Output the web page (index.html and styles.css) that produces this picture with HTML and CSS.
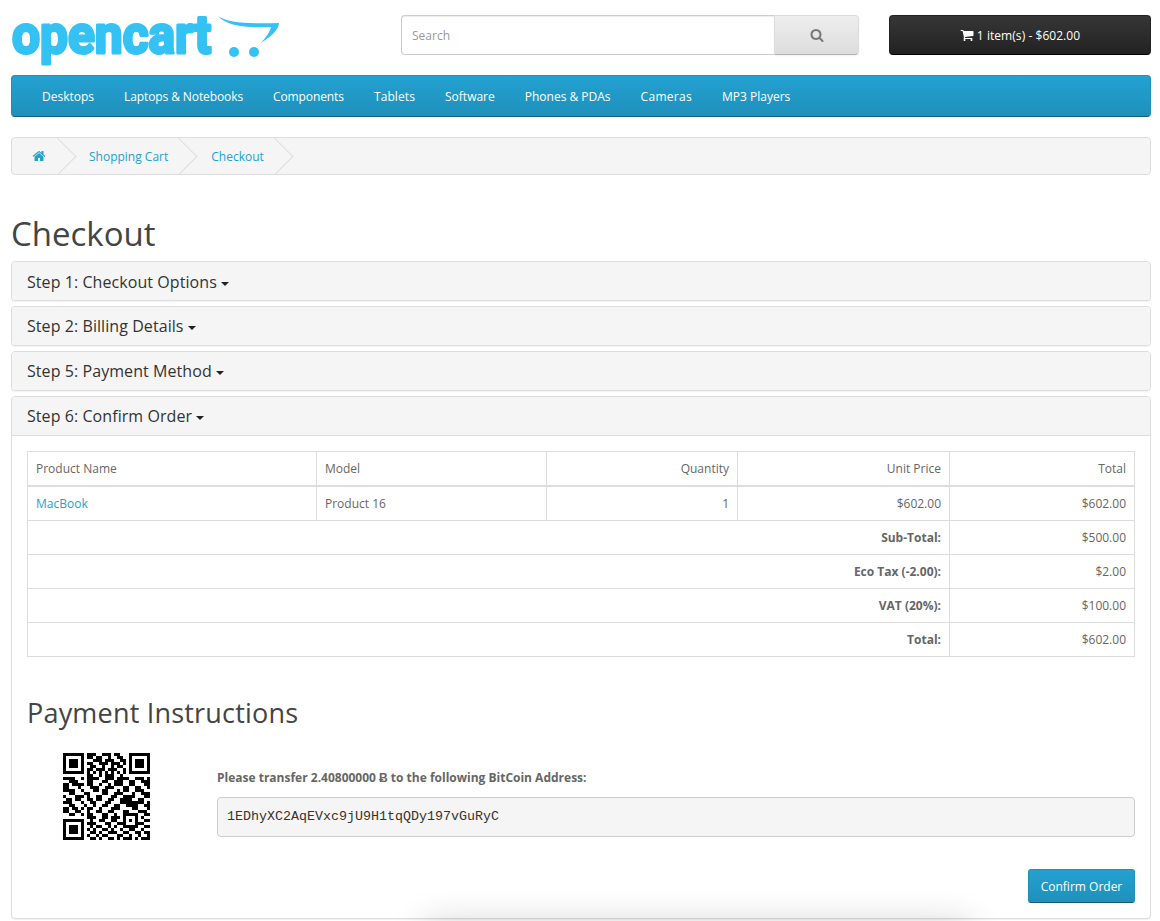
FILE: index.html
```html
<!DOCTYPE html>
<html lang="en">
<head>
  <meta charset="UTF-8">
  <title>Checkout</title>
  <link rel="stylesheet" href="styles.css">
</head>
<body>
  <div class="container">
    <header class="top">
      <a class="logo" href="#">
        <svg width="270" height="50" viewBox="11 15 270 50">
          <text class="logo-text" transform="translate(12 53) scale(0.92 1)">opencart</text>
          <path class="logo-cart" d="M218 16C228 23 250 24 279 23C279 30 270 37 261 43C266 37 270 32 271 27C250 28 228 27 218 16Z"/>
          <circle class="logo-cart" cx="234" cy="52" r="5"/>
          <circle class="logo-cart" cx="254" cy="52" r="5"/>
        </svg>
      </a>
      <div class="search">
        <input class="search-input" type="text" placeholder="Search">
        <button class="search-btn" type="button">
          <svg class="icon" viewBox="0 0 1792 1792"><path d="M1216 832q0-185-131.500-316.500t-316.500-131.500-316.500 131.500-131.500 316.500 131.500 316.500 316.500 131.500 316.500-131.500 131.500-316.500zm512 832q0 52-38 90t-90 38q-54 0-90-38l-343-342q-179 124-399 124-143 0-273.500-55.500t-225-150-150-225-55.500-273.500 55.500-273.500 150-225 225-150 273.500-55.500 273.500 55.500 225 150 150 225 55.500 273.500q0 220-124 399l343 343q37 37 37 90z"/></svg>
        </button>
      </div>
      <button class="cart" type="button">
        <svg class="icon" viewBox="0 0 1792 1792"><path d="M704 1536q0 52-38 90t-90 38-90-38-38-90 38-90 90-38 90 38 38 90zm896 0q0 52-38 90t-90 38-90-38-38-90 38-90 90-38 90 38 38 90zm128-1088v512q0 24-16.500 42.500t-40.500 21.500l-1044 122q13 60 13 70 0 16-24 64h920q26 0 45 19t19 45-19 45-45 19h-1024q-26 0-45-19t-19-45q0-11 8-31.500t16-36 21.500-40 15.500-29.500l-177-823h-204q-26 0-45-19t-19-45 19-45 45-19h256q16 0 28.500 6.500t19.500 15.500 13 24.500 8 26 5.500 29.500 4.500 26h1201q26 0 45 19t19 45z"/></svg>
        <span>1 item(s) - $602.00</span>
      </button>
    </header>

    <nav class="menu">
      <a href="#">Desktops</a>
      <a href="#">Laptops &amp; Notebooks</a>
      <a href="#">Components</a>
      <a href="#">Tablets</a>
      <a href="#">Software</a>
      <a href="#">Phones &amp; PDAs</a>
      <a href="#">Cameras</a>
      <a href="#">MP3 Players</a>
    </nav>

    <ul class="breadcrumb">
      <li class="crumb-home"><a href="#"><svg class="icon" viewBox="0 0 1792 1792"><path d="M1472 992v480q0 26-19 45t-45 19h-384v-384h-256v384h-384q-26 0-45-19t-19-45v-480q0-1 .5-3t.5-3l575-474 575 474q1 2 1 6zm223-69l-62 74q-8 9-21 11h-3q-13 0-21-7l-692-577-692 577q-12 8-24 7-13-2-21-11l-62-74q-8-10-7-23.500t11-21.500l719-599q32-26 76-26t76 26l244 204v-195q0-14 9-23t23-9h192q14 0 23 9t9 23v408l219 182q10 8 11 21.500t-7 23.500z"/></svg></a></li>
      <li><a href="#">Shopping Cart</a></li>
      <li><a href="#">Checkout</a></li>
    </ul>

    <h1>Checkout</h1>

    <div class="panel">
      <div class="panel-heading">Step 1: Checkout Options <i class="caret"></i></div>
    </div>
    <div class="panel">
      <div class="panel-heading">Step 2: Billing Details <i class="caret"></i></div>
    </div>
    <div class="panel">
      <div class="panel-heading">Step 5: Payment Method <i class="caret"></i></div>
    </div>
    <div class="panel panel-open">
      <div class="panel-heading">Step 6: Confirm Order <i class="caret"></i></div>
      <div class="panel-body">
        <table class="order">
          <colgroup>
            <col class="col-name"><col class="col-model"><col class="col-qty"><col class="col-price"><col class="col-total">
          </colgroup>
          <thead>
            <tr>
              <td>Product Name</td>
              <td>Model</td>
              <td class="right">Quantity</td>
              <td class="right">Unit Price</td>
              <td class="right">Total</td>
            </tr>
          </thead>
          <tbody>
            <tr>
              <td><a href="#">MacBook</a></td>
              <td>Product 16</td>
              <td class="right">1</td>
              <td class="right">$602.00</td>
              <td class="right">$602.00</td>
            </tr>
          </tbody>
          <tfoot>
            <tr><td colspan="4" class="right"><strong>Sub-Total:</strong></td><td class="right">$500.00</td></tr>
            <tr><td colspan="4" class="right"><strong>Eco Tax (-2.00):</strong></td><td class="right">$2.00</td></tr>
            <tr><td colspan="4" class="right"><strong>VAT (20%):</strong></td><td class="right">$100.00</td></tr>
            <tr><td colspan="4" class="right"><strong>Total:</strong></td><td class="right">$602.00</td></tr>
          </tfoot>
        </table>

        <h2>Payment Instructions</h2>
        <div class="payment">
          <div class="qr-col">
            <svg class="qr" width="87" height="87" viewBox="0 0 29 29">
              <path d="M0 .5h7M8 .5h3M13 .5h3M17 .5h2M22 .5h7M0 1.500h1M6 1.500h1M8 1.500h2M11 1.500h2M15 1.500h1M18 1.500h2M22 1.500h1M28 1.500h1M0 2.500h1M2 2.500h3M6 2.500h1M10 2.500h3M14 2.500h3M19 2.500h2M22 2.500h1M24 2.500h3M28 2.500h1M0 3.500h1M2 3.500h3M6 3.500h1M8 3.500h2M12 3.500h3M16 3.500h3M20 3.500h1M22 3.500h1M24 3.500h3M28 3.500h1M0 4.500h1M2 4.500h3M6 4.500h1M9 4.500h2M13 4.500h1M16 4.500h1M18 4.500h2M22 4.500h1M24 4.500h3M28 4.500h1M0 5.500h1M6 5.500h1M8 5.500h2M11 5.500h3M15 5.500h3M20 5.500h1M22 5.500h1M28 5.500h1M0 6.500h7M8 6.500h1M10 6.500h1M12 6.500h1M14 6.500h1M16 6.500h1M18 6.500h1M20 6.500h1M22 6.500h7M8 7.500h2M12 7.500h1M14 7.500h3M19 7.500h1"/>
              <path d="M0 8.500h4M6 8.500h1M8 8.500h4M14 8.500h3M18 8.500h4M24 8.500h3M28 8.500h1M2 9.500h3M8 9.500h2M13 9.500h2M17 9.500h3M22 9.500h2M26 9.500h3M0 10.500h2M3 10.500h4M8 10.500h2M12 10.500h1M15 10.500h1M17 10.500h3M22 10.500h2M27 10.500h2M0 11.500h2M5 11.500h1M9 11.500h3M14 11.500h3M20 11.500h2M24 11.500h2M28 11.500h1M0 12.500h4M6 12.500h1M10 12.500h2M13 12.500h2M18 12.500h1M20 12.500h2M24 12.500h3M2 13.500h2M7 13.500h2M13 13.500h2M17 13.500h3M23 13.500h1M26 13.500h3M0 14.500h1M4 14.500h3M8 14.500h1M11 14.500h2M16 14.500h2M20 14.500h4M27 14.500h2M1 15.500h2M4 15.500h2M8 15.500h2M11 15.500h2M15 15.500h2M19 15.500h4M25 15.500h2M0 16.500h3M6 16.500h1M9 16.500h2M14 16.500h2M19 16.500h8M28 16.500h1M2 17.500h2M7 17.500h1M10 17.500h1M13 17.500h2M17 17.500h2M21 17.500h4M27 17.500h2M0 18.500h2M3 18.500h2M6 18.500h1M8 18.500h2M12 18.500h1M16 18.500h3M23 18.500h2M28 18.500h1M0 19.500h2M4 19.500h2M8 19.500h1M11 19.500h2M15 19.500h2M20 19.500h2M25 19.500h3M2 20.500h2M6 20.500h1M8 20.500h2M13 20.500h2M17 20.500h1M20 20.500h5M27 20.500h2M8 21.500h3M13 21.500h2M16 21.500h3M20 21.500h1M24 21.500h1M26 21.500h1"/>
              <path d="M0 22.500h7M9 22.500h1M12 22.500h2M16 22.500h2M20 22.500h1M22 22.500h1M24 22.500h1M27 22.500h2M0 23.500h1M6 23.500h1M8 23.500h3M14 23.500h2M18 23.500h3M24 23.500h3M0 24.500h1M2 24.500h3M6 24.500h1M9 24.500h1M11 24.500h2M15 24.500h1M17 24.500h1M20 24.500h5M27 24.500h2M0 25.500h1M2 25.500h3M6 25.500h1M8 25.500h1M10 25.500h1M13 25.500h2M16 25.500h1M19 25.500h1M22 25.500h2M26 25.500h1M0 26.500h1M2 26.500h3M6 26.500h1M9 26.500h2M12 26.500h1M15 26.500h3M20 26.500h2M24 26.500h2M27 26.500h2M0 27.500h1M6 27.500h1M8 27.500h1M11 27.500h1M13 27.500h2M18 27.500h2M22 27.500h1M25 27.500h1M28 27.500h1M0 28.500h7M9 28.500h2M12 28.500h1M15 28.500h2M18 28.500h1M20 28.500h3M24 28.500h1M26 28.500h3"/>
            </svg>
          </div>
          <div class="address-col">
            <p class="address-label">Please transfer 2.40800000 Ƀ to the following BitCoin Address:</p>
            <pre class="address">1EDhyXC2AqEVxc9jU9H1tqQDy197vGuRyC</pre>
          </div>
        </div>
        <div class="buttons">
          <button class="btn-primary" type="button">Confirm Order</button>
        </div>
        <div class="fade"></div>
      </div>
    </div>
  </div>
</body>
</html>
```

FILE: styles.css
```css
* { box-sizing: border-box; }
body { margin: 0; font-family: "Open Sans", sans-serif; font-size: 12px; line-height: 17px; color: #666; background-color: #fff; }
a { color: #23a1d1; text-decoration: none; }
.container { width: 1160px; height: 921px; padding: 15px 9px 0 11px; overflow: hidden; }
.icon { display: block; width: 14px; height: 14px; fill: currentColor; }

.top { display: flex; align-items: flex-start; height: 50px; }
.logo { display: block; width: 390px; height: 50px; }
.logo svg { display: block; overflow: visible; }
.logo-text { font-family: Roboto, sans-serif; font-weight: 700; font-size: 54px; fill: #33c2f3; stroke: #33c2f3; stroke-width: 3px; stroke-linejoin: round; }
.logo-cart { fill: #33c2f3; }

.search { display: flex; width: 458px; height: 40px; }
.search-input { flex: 1; height: 40px; padding: 10px; font-family: inherit; font-size: 12px; color: #555; border: 1px solid #ccc; border-right: 0; border-radius: 4px 0 0 4px; box-shadow: inset 0 1px 1px rgba(0,0,0,0.075); outline: none; }
.search-input::placeholder { color: #999; }
.search-btn { display: flex; align-items: center; justify-content: center; width: 85px; height: 40px; padding: 0; color: #777; background: linear-gradient(to bottom, #eeeeee, #dddddd); border: 1px solid #ddd; border-bottom-color: #b3b3b3; border-radius: 0 4px 4px 0; box-shadow: 0 1px 2px rgba(0,0,0,0.05); }
.cart { display: flex; align-items: center; justify-content: center; gap: 3px; width: 262px; height: 40px; margin-left: 30px; padding: 0; font-family: inherit; font-size: 12px; letter-spacing: 0.05px; color: #fff; background: linear-gradient(to bottom, #363636, #222222); border: 1px solid #222; border-bottom-color: #000; border-radius: 4px; }

.menu { display: flex; height: 42px; margin-top: 10px; padding: 0 15px; background: linear-gradient(to bottom, #23a1d1, #1f90bb); border: 1px solid #1f90bb; border-bottom-color: #145e7a; border-radius: 4px; }
.menu a { padding: 0 15px; line-height: 41px; color: #fff; }
/* glyph advances differ a little per word from the original */
.menu a:nth-child(2), .menu a:nth-child(3) { letter-spacing: -0.1px; }
.menu a:nth-child(4) { letter-spacing: 0.1px; }
.menu a:nth-child(7) { letter-spacing: 0.3px; }

.breadcrumb { display: flex; height: 38px; margin: 20px 0 41px; padding: 0; list-style: none; background-color: #f5f5f5; border: 1px solid #ddd; border-radius: 4px; overflow: hidden; }
.breadcrumb li { position: relative; padding: 0 29px 0 13px; line-height: 37px; }
.breadcrumb li:last-child { padding-left: 14px; }
.breadcrumb li::after { content: ""; position: absolute; top: 5px; right: 5px; width: 26px; height: 26px; border-top: 1px solid #ddd; border-right: 1px solid #ddd; transform: rotate(45deg); }
.breadcrumb .crumb-home { width: 64px; padding: 11px 0 0 20px; }

h1 { margin: 0 0 9px; font-size: 33px; font-weight: 400; line-height: 36px; color: #444; }
h2 { margin: 41px 0 25px; font-size: 27px; font-weight: 400; line-height: 30px; letter-spacing: 0.2px; color: #444; }

.panel { margin-bottom: 5px; background-color: #fff; border: 1px solid #ddd; border-radius: 4px; box-shadow: 0 1px 1px rgba(0,0,0,0.05); }
.panel-heading { height: 38px; padding: 0 15px; font-size: 16px; line-height: 38px; letter-spacing: 0.07px; color: #333; background-color: #f5f5f5; border-radius: 3px; }
.panel:first-of-type .panel-heading { line-height: 40px; }
.panel-open .panel-heading { height: 39px; border-bottom: 1px solid #ddd; border-radius: 3px 3px 0 0; }
.caret { display: inline-block; width: 0; height: 0; vertical-align: middle; border-top: 4px solid #222; border-left: 4px solid transparent; border-right: 4px solid transparent; }
.panel-body { position: relative; height: 482px; padding: 15px; }

.order { width: 1107px; table-layout: fixed; border-collapse: collapse; }
.order td { height: 34px; padding: 8px; border: 1px solid #ddd; }
.order thead td { border-bottom-width: 2px; }
.order .right { text-align: right; }
.col-name { width: 289px; }
.col-model { width: 230px; }
.col-qty { width: 191px; }
.col-price { width: 212px; }
.col-total { width: 185px; }

.payment { display: flex; }
.qr-col { width: 190px; padding-left: 36px; }
.qr { display: block; fill: none; stroke: #000; stroke-width: 1; shape-rendering: crispEdges; }
.address-col { flex: 1; padding-top: 16px; }
.address-label { margin: 0 0 11px; font-weight: 700; }
.address { height: 40px; margin: 0; padding: 9px; font-family: "Liberation Mono", monospace; font-size: 13.33px; line-height: 20px; color: #333; background-color: #f5f5f5; border: 1px solid #ccc; border-radius: 4px; }

.buttons { display: flex; justify-content: flex-end; margin-top: 29px; }
.btn-primary { width: 107px; height: 34px; padding: 0; font-family: inherit; font-size: 12px; color: #fff; background: linear-gradient(to bottom, #23a1d1, #1f90bb); border: 1px solid #1f90bb; border-bottom-color: #145e7a; border-radius: 3px; }

/* faint shadow coming up from below the window */
.fade { position: absolute; left: 420px; width: 530px; bottom: -24px; height: 10px; box-shadow: 0 0 36px 8px rgba(0,0,0,0.2); pointer-events: none; }
```
